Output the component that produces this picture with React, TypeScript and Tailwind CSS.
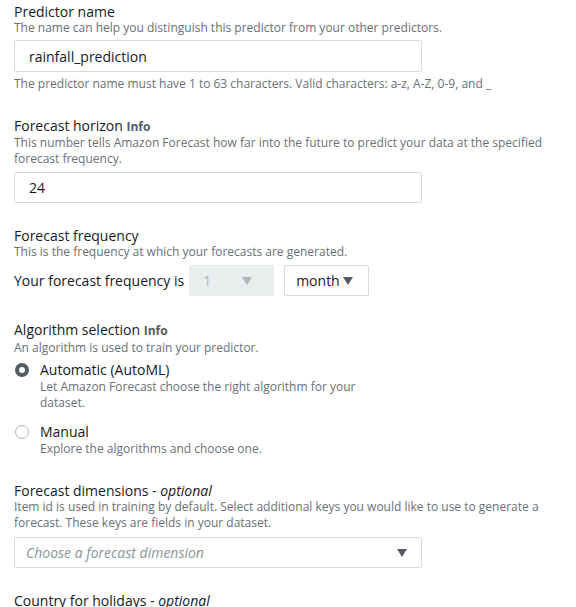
const Caret = ({ className = '' }: { className?: string }) => (
  <svg viewBox="0 0 10 8" className={`w-[10px] h-[8px] ${className}`}>
    <path d="M0 0h10L5 8z" fill="currentColor" />
  </svg>
)

const Label = ({ children }: { children: React.ReactNode }) => (
  <div className="text-[14px] leading-[17px] text-[#16191f]">{children}</div>
)

const Desc = ({ children }: { children: React.ReactNode }) => (
  <div className="text-[12px] leading-[16px] text-[#687078]">{children}</div>
)

const Info = () => <span className="text-[12px] font-bold text-[#545b64]">Info</span>

const TextBox = ({ value, h = 'h-[32px]' }: { value: string; h?: string }) => (
  <div className={`w-[408px] ${h} border border-[#d5dbdb] rounded-[2px] flex items-center px-[14px] text-[14px] text-[#16191f]`}>
    {value}
  </div>
)

const Radio = ({ checked }: { checked?: boolean }) =>
  checked ? (
    <div className="w-[14px] h-[14px] rounded-full border-[4px] border-[#545b64] bg-white" />
  ) : (
    <div className="w-[14px] h-[14px] rounded-full border border-[#aab7b8] bg-white" />
  )

export default function App() {
  return (
    <div className="w-[576px] h-[607px] overflow-hidden bg-white pl-[14px] pt-[3px]" style={{ fontFamily: '"Open Sans", "Noto Sans", sans-serif' }}>
      {/* Predictor name */}
      <Label>Predictor name</Label>
      <Desc>The name can help you distinguish this predictor from your other predictors.</Desc>
      <div className="mt-[4px]"><TextBox value="rainfall_prediction" /></div>
      <div className="mt-[4px]"><Desc>The predictor name must have 1 to 63 characters. Valid characters: a-z, A-Z, 0-9, and _</Desc></div>

      {/* Forecast horizon */}
      <div className="mt-[25px]"><Label>Forecast horizon <Info /></Label></div>
      <Desc>This number tells Amazon Forecast how far into the future to predict your data at the specified forecast frequency.</Desc>
      <div className="mt-[5px]"><TextBox value="24" h="h-[31px]" /></div>

      {/* Forecast frequency */}
      <div className="mt-[24px]"><Label>Forecast frequency</Label></div>
      <Desc>This is the frequency at which your forecasts are generated.</Desc>
      <div className="mt-[5px] flex items-center">
        <span className="text-[14px] text-[#16191f]">Your forecast frequency is</span>
        <div className="ml-[5px] w-[85px] h-[31px] bg-[#eaeded] flex items-center justify-between pl-[14px] pr-[22px] text-[14px] text-[#aab7b8]">
          <span>1</span>
          <Caret className="text-[#aab7b8]" />
        </div>
        <div className="ml-[10px] w-[85px] h-[31px] border border-[#d5dbdb] rounded-[2px] flex items-center pl-[11px] gap-[3px] text-[14px] text-[#16191f]">
          <span>month</span>
          <Caret className="text-[#545b64]" />
        </div>
      </div>

      {/* Algorithm selection */}
      <div className="mt-[25px]"><Label>Algorithm selection <Info /></Label></div>
      <div className="mt-[1px]"><Desc>An algorithm is used to train your predictor.</Desc></div>
      <div className="mt-[5px] flex items-start">
        <div className="w-[26px] pt-[2px] pl-[1px]"><Radio checked /></div>
        <div>
          <div className="text-[14px] leading-[18px] text-[#16191f]">Automatic (AutoML)</div>
          <div className="w-[335px]"><Desc>Let Amazon Forecast choose the right algorithm for your dataset.</Desc></div>
        </div>
      </div>
      <div className="mt-[12px] flex items-start">
        <div className="w-[26px] pt-[2px] pl-[1px]"><Radio /></div>
        <div>
          <div className="text-[14px] leading-[18px] text-[#16191f]">Manual</div>
          <Desc>Explore the algorithms and choose one.</Desc>
        </div>
      </div>

      {/* Forecast dimensions */}
      <div className="mt-[25px]"><Label>Forecast dimensions - <i>optional</i></Label></div>
      <Desc>Item id is used in training by default. Select additional keys you would like to use to generate a forecast. These keys are fields in your dataset.</Desc>
      <div className="mt-[6px] w-[408px] h-[31px] border border-[#d5dbdb] rounded-[2px] flex items-center justify-between pl-[11px] pr-[14px]">
        <span className="text-[14px] italic text-[#879596]">Choose a forecast dimension</span>
        <Caret className="text-[#545b64]" />
      </div>

      {/* Country for holidays */}
      <div className="mt-[24px]"><Label>Country for holidays - <i>optional</i></Label></div>
    </div>
  )
}
